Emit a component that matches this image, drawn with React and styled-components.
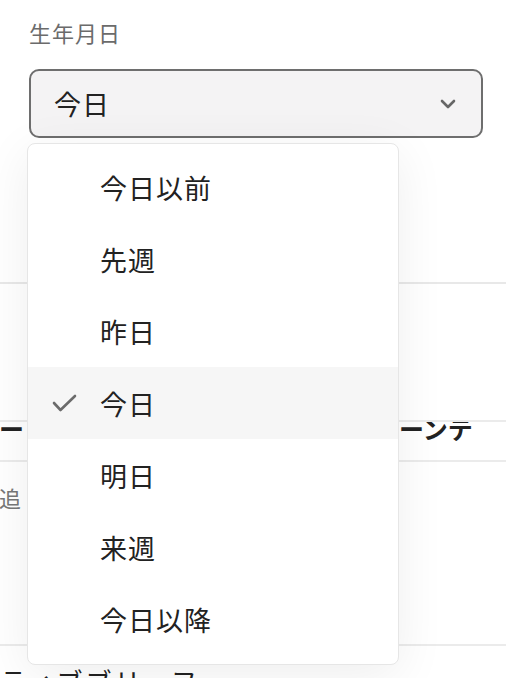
import React from 'react'
import styled, { createGlobalStyle } from 'styled-components';

const GlobalStyle = createGlobalStyle`
    html, body {
        margin: 0;
        padding: 0;
        background: #ffffff;
        overflow: hidden;
    }
    body {
        font-family: "Noto Sans CJK JP", "Noto Sans", sans-serif;
        color: #222222;
    }
`;

const options = ['今日以前', '先週', '昨日', '今日', '明日', '来週', '今日以降'];
const selected = '今日';

function App() {
    return (
        <PageStyled>
            <GlobalStyle />
            <FormArea>
                <Label>生年月日</Label>
                <SelectBox>
                    <span>{selected}</span>
                    <svg width="18" height="12" viewBox="0 0 18 12">
                        <path d="M3 3 L9 9 L15 3" fill="none" stroke="#666" strokeWidth="2.6" strokeLinecap="round" strokeLinejoin="round" />
                    </svg>
                </SelectBox>
            </FormArea>
            <EmptyBand />
            <HeadingRow>
                <span className="left">ー</span>
                <span className="right">ーンテ</span>
            </HeadingRow>
            <NoteRow>
                <NoteText>追</NoteText>
            </NoteRow>
            <BottomRow>ティブブリーフ</BottomRow>

            <Menu>
                {options.map((o) => (
                    <MenuItem key={o} $active={o === selected}>
                        <CheckCell>
                            {o === selected && (
                                <svg width="26" height="20" viewBox="0 0 26 20">
                                    <path d="M2 9 L8.5 16 L23 2" fill="none" stroke="#6b6b6b" strokeWidth="2.6" strokeLinecap="round" strokeLinejoin="round" />
                                </svg>
                            )}
                        </CheckCell>
                        <span>{o}</span>
                    </MenuItem>
                ))}
            </Menu>
        </PageStyled>
    )
}

const PageStyled = styled.div`
    position: relative;
    width: 506px;
    height: 678px;
    overflow: hidden;
    background: #ffffff;
`;

const FormArea = styled.section`
    height: 284px;
    padding: 17px 23px 0 29px;
    box-sizing: border-box;
    border-bottom: 2px solid #e8e8e8;
`;

const Label = styled.div`
    font-size: 22px;
    line-height: 30px;
    color: #6b6b6b;
    letter-spacing: 1px;
`;

const SelectBox = styled.div`
    margin-top: 22px;
    height: 69px;
    box-sizing: border-box;
    border: 2px solid #6e6e6e;
    border-radius: 10px;
    background: #f4f3f4;
    display: flex;
    align-items: center;
    justify-content: space-between;
    padding: 0 24px 0 23px;
    font-size: 27px;
    letter-spacing: 1px;
    color: #222;
    span { line-height: 1; }
`;

const EmptyBand = styled.div`
    height: 136px;
    border-bottom: 2px solid #ebebeb;
`;

const HeadingRow = styled.div`
    height: 38px;
    border-bottom: 2px solid #ebebeb;
    overflow: hidden;
    display: grid;
    grid-template-columns: 399px 1fr;
    font-size: 25px;
    font-weight: 700;
    color: #222;
    span {
        display: block;
        white-space: nowrap;
        line-height: 30px;
        margin-top: -9px;
    }
    .left { margin-left: -1px; }
`;

const NoteRow = styled.div`
    height: 184px;
    border-bottom: 2px solid #ebebeb;
    padding-top: 20px;
    box-sizing: border-box;
`;

const NoteText = styled.div`
    font-size: 22px;
    line-height: 30px;
    color: #777;
    margin-left: -1px;
`;

const BottomRow = styled.div`
    padding-top: 20px;
    font-size: 26px;
    line-height: 30px;
    color: #222;
    letter-spacing: 3px;
    white-space: nowrap;
`;

const Menu = styled.div`
    position: absolute;
    left: 27px;
    top: 143px;
    width: 372px;
    box-sizing: border-box;
    padding: 7px 0 9px;
    background: #ffffff;
    border: 1.5px solid #e6e6e6;
    border-radius: 8px;
    box-shadow: 0 10px 50px rgba(0, 0, 0, 0.07);
`;

const MenuItem = styled.div`
    height: 72px;
    display: grid;
    grid-template-columns: 72px 1fr;
    align-items: center;
    font-size: 27px;
    letter-spacing: 1px;
    color: #222;
    background: ${p => (p.$active ? '#f6f6f6' : 'transparent')};
    span { line-height: 1; }
`;

const CheckCell = styled.div`
    display: flex;
    align-items: center;
    padding-left: 24px;
    padding-top: 1px;
`;

export default App;
